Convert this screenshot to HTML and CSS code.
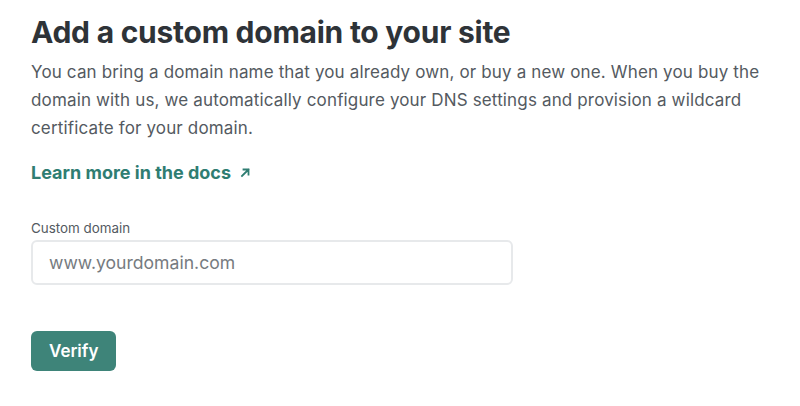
FILE: index.html
```html
<!DOCTYPE html>
<html>
<head>
<meta charset="utf-8">
<link rel="stylesheet" href="styles.css">
</head>
<body>
<main class="page">
  <h1 class="title">Add a custom domain to your site</h1>
  <p class="intro">You can bring a domain name that you already own, or buy a new one. When you buy the domain with us, we automatically configure your DNS settings and provision a wildcard certificate for your domain.</p>
  <a class="docs-link" href="#">Learn more in the docs <svg class="arrow" width="11" height="11" viewBox="0 0 11 11"><path d="M2 9L8.5 2.5M3.5 2.5H8.5V7.5" fill="none" stroke="currentColor" stroke-width="1.8" stroke-linecap="square"/></svg></a>
  <form class="form">
    <label class="field-label" for="domain">Custom domain</label>
    <input class="field-input" id="domain" type="text" placeholder="www.yourdomain.com">
    <button class="btn" type="button">Verify</button>
  </form>
</main>
</body>
</html>
```
FILE: styles.css
```css
* { box-sizing: border-box; }
body {
  margin: 0;
  background: #ffffff;
  font-family: Inter, "Noto Sans", sans-serif;
  color: #2e3338;
}
.page {
  padding: 14px 31px 0;
  display: flex;
  flex-direction: column;
  align-items: flex-start;
}
.title {
  margin: 0;
  font-size: 30px;
  font-weight: 700;
  line-height: 36px;
  color: #2e3338;
  letter-spacing: -0.25px;
}
.intro {
  margin: 8px 0 0;
  font-size: 17px;
  line-height: 28px;
  color: #545a61;
  letter-spacing: 0.15px;
  max-width: 760px;
}
.docs-link {
  margin-top: 20px;
  font-size: 18px;
  font-weight: 700;
  color: #2f7d72;
  text-decoration: none;
  display: inline-flex;
  align-items: center;
  gap: 9px;
}
.form {
  margin-top: 36px;
  display: flex;
  flex-direction: column;
  align-items: flex-start;
}
.field-label {
  font-size: 13.4px;
  color: #545a61;
  line-height: 18px;
}
.field-input {
  margin-top: 3px;
  width: 482px;
  height: 45px;
  border: 2px solid #e7e9eb;
  border-radius: 6px;
  padding: 0 16px;
  font-family: Inter, sans-serif;
  font-size: 17.6px;
  color: #2e3338;
  outline: none;
}
.field-input::placeholder { color: #767b80; }
.btn {
  margin-top: 46px;
  height: 40px;
  padding: 0 18px;
  border: none;
  border-radius: 6px;
  background: #3e8479;
  color: #ffffff;
  font-family: Inter, sans-serif;
  font-size: 17px;
  font-weight: 600;
}
```
